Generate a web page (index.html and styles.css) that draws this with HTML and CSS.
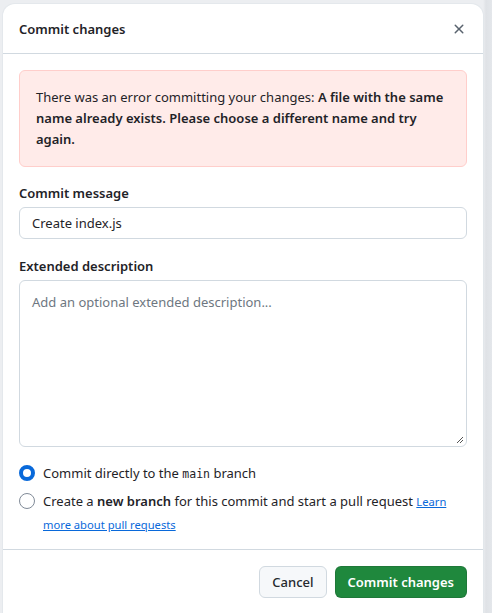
FILE: index.html
```html
<!DOCTYPE html>
<html>
<head>
<meta charset="utf-8">
<link rel="stylesheet" href="styles.css">
</head>
<body>
<div class="dialog">
  <div class="header">
    <h1 class="title">Commit changes</h1>
    <button class="close" aria-label="Close">
      <svg width="16" height="16" viewBox="0 0 16 16"><path d="M3.72 3.72a.75.75 0 0 1 1.06 0L8 6.94l3.22-3.22a.75.75 0 1 1 1.06 1.06L9.06 8l3.22 3.22a.75.75 0 1 1-1.06 1.06L8 9.06l-3.22 3.22a.75.75 0 0 1-1.06-1.06L6.94 8 3.72 4.78a.75.75 0 0 1 0-1.06Z" fill="#59636e"/></svg>
    </button>
  </div>
  <div class="body">
    <div class="flash">There was an error committing your changes: <strong>A file with the same name already exists. Please choose a different name and try again.</strong></div>
    <label class="label">Commit message</label>
    <div class="input">Create index.js</div>
    <label class="label label-2">Extended description</label>
    <div class="textarea">
      <span class="placeholder">Add an optional extended description...</span>
      <svg class="grip" width="8" height="8" viewBox="0 0 8 8"><path d="M7 1L1 7M7 4L4 7" stroke="#555" stroke-width="1"/></svg>
    </div>
    <div class="radios">
      <div class="radio-row">
        <span class="radio checked"></span>
        <span class="radio-text">Commit directly to the <code>main</code> branch</span>
      </div>
      <div class="radio-row">
        <span class="radio"></span>
        <span class="radio-text">Create a <strong>new branch</strong> for this commit and start a pull request <a href="#">Learn more about pull requests</a></span>
      </div>
    </div>
  </div>
  <div class="footer">
    <button class="btn">Cancel</button>
    <button class="btn btn-primary">Commit changes</button>
  </div>
</div>
</body>
</html>
```
FILE: styles.css
```css
html, body { margin: 0; padding: 0; }
body {
  background: linear-gradient(to right, #eceef1 0, #eceef1 483px, #dfe2e6 486px, #e4e7eb 492px);
  font-family: "Noto Sans", "Open Sans", sans-serif;
  font-size: 13px;
  color: #1f2328;
  height: 613px;
  overflow: hidden;
  padding: 4px 9px 0 3px;
  box-sizing: border-box;
}
.dialog {
  background: #fff;
  border-radius: 12px;
  height: 620px;
  box-shadow: 0 0 0 1px rgba(209,217,224,0.3);
  display: flex;
  flex-direction: column;
}
.header {
  display: flex;
  align-items: center;
  justify-content: space-between;
  padding: 0 16px;
  height: 50px;
  box-sizing: border-box;
  border-bottom: 1px solid #d1d9e0;
}
.title {
  margin: 0;
  font-size: 13px;
  font-weight: 600;
}
.close {
  border: 0;
  background: none;
  padding: 0;
  width: 32px;
  height: 32px;
  display: flex;
  align-items: center;
  justify-content: center;
  margin-right: -8px;
}
.body {
  padding: 16px 16px 0;
}
.flash {
  background: #ffebe9;
  border: 1px solid #ffcecb;
  border-radius: 6px;
  padding: 16px 16px;
  line-height: 21px;
  margin-bottom: 16px;
}
.flash strong { font-weight: 600; }
.label {
  display: block;
  font-weight: 600;
  line-height: 20px;
  margin-bottom: 4px;
}
.label-2 { margin-top: 17px; }
.input {
  height: 32px;
  box-sizing: border-box;
  border: 1px solid #d1d9e0;
  border-radius: 6px;
  padding: 0 12px;
  line-height: 30px;
}
.textarea {
  position: relative;
  height: 167px;
  box-sizing: border-box;
  border: 1px solid #d1d9e0;
  border-radius: 6px;
  padding: 11px 12px;
  line-height: 20px;
}
.placeholder { color: #6e7781; }
.grip { position: absolute; right: 2px; bottom: 2px; }
.radios {
  margin-top: 15px;
  display: flex;
  flex-direction: column;
  gap: 5px;
}
.radio-row {
  display: flex;
  align-items: flex-start;
  gap: 8px;
  line-height: 22px;
}
.radio {
  flex: none;
  width: 16px;
  height: 16px;
  box-sizing: border-box;
  border-radius: 50%;
  border: 1px solid #818b98;
  margin-top: 3px;
  background: #fff;
}
.radio.checked { border: 4px solid #0969da; }
.radio-text strong { font-weight: 600; }
code {
  font-family: "DejaVu Sans Mono", "Liberation Mono", monospace;
  font-size: 11.5px;
}
a {
  color: #0969da;
  font-size: 11.2px;
  text-decoration: underline;
}
.footer {
  margin-top: 13px;
  border-top: 1px solid #d1d9e0;
  display: flex;
  justify-content: flex-end;
  gap: 8px;
  padding: 16px 16px;
}
.btn {
  height: 32px;
  padding: 0 12px;
  border: 1px solid #d1d9e0;
  border-radius: 6px;
  background: #f6f8fa;
  color: #25292e;
  font-family: inherit;
  font-size: 13px;
  font-weight: 500;
}
.btn-primary {
  background: #1f883d;
  border-color: rgba(31,35,40,0.15);
  color: #fff;
  font-weight: 600;
}
```
